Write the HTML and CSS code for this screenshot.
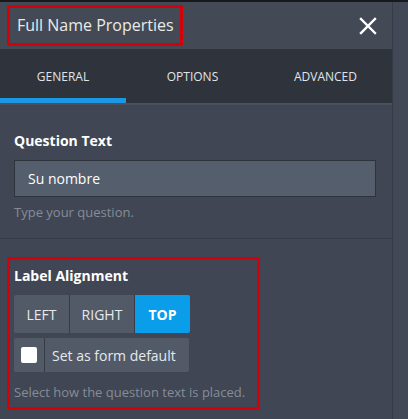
FILE: index.html
```html
<!DOCTYPE html>
<html>
<head>
    <meta charset="utf-8" />
    <title>Full Name Properties</title>
    <link rel="stylesheet" href="styles.css">
</head>
<body>
    <section class="panel">
        <header class="panel-header">
            <h1 class="panel-title">Full Name Properties</h1>
            <button class="close-btn" aria-label="Close">
                <svg width="18" height="18" viewBox="0 0 18 18">
                    <path d="M2 2 L16 16 M16 2 L2 16" stroke="#ffffff" stroke-width="2.4" stroke-linecap="square" />
                </svg>
            </button>
        </header>
        <nav class="tabs">
            <div class="tab active">GENERAL</div>
            <div class="tab">OPTIONS</div>
            <div class="tab">ADVANCED</div>
        </nav>
        <div class="field">
            <div class="field-label">Question Text</div>
            <input class="text-input" type="text" value="Su nombre" />
            <div class="field-help">Type your question.</div>
        </div>
        <div class="field field-marked">
            <div class="field-label">Label Alignment</div>
            <div class="btn-group">
                <button class="seg seg-left">LEFT</button>
                <button class="seg seg-right">RIGHT</button>
                <button class="seg selected">TOP</button>
            </div>
            <label class="check-row">
                <span class="check-cell"><span class="check-box"></span></span>
                <span class="check-text">Set as form default</span>
            </label>
            <div class="field-help">Select how the question text is placed.</div>
        </div>
    </section>
</body>
</html>
```
FILE: styles.css
```css
html, body {
    margin: 0;
    padding: 0;
}

body {
    background-color: #424855;
    border-top: 2px solid #17191d;
    font-family: "Open Sans", "Noto Sans", sans-serif;
    height: 417px;
    overflow: hidden;
}

.panel {
    width: 392px;
    height: 100%;
    background-color: #404653;
    border-right: 1px solid #363b46;
}

.panel-header {
    height: 47px;
    background-color: #434955;
    display: flex;
    align-items: center;
    justify-content: space-between;
}

.panel-title {
    margin: 0 0 0 7px;
    border: 3px solid #d4000a;
    border-radius: 2px;
    padding: 0 6px 0 7px;
    height: 35px;
    line-height: 34px;
    font-size: 16px;
    font-weight: normal;
    color: #e9ece8;
}

.close-btn {
    background: none;
    border: none;
    padding: 0;
    margin-right: 15px;
    width: 18px;
    height: 18px;
}

.tabs {
    display: flex;
    height: 54px;
    background-color: #2f333b;
    border-bottom: 2px solid #4a505c;
}

.tab {
    flex: 1;
    display: flex;
    align-items: center;
    justify-content: center;
    font-size: 12px;
    color: #e1e4e8;
    border-bottom: 5px solid transparent;
    box-sizing: border-box;
    padding-top: 5px;
}

    .tab.active {
        border-bottom-color: #1b97e3;
        flex: 0 0 126px;
    }

.field {
    padding: 26px 14px 17px 14px;
    border-bottom: 1px solid #373c47;
}

.field-label {
    font-size: 14px;
    line-height: 19px;
    font-weight: bold;
    color: #ffffff;
    margin-bottom: 10px;
}

.text-input {
    display: block;
    box-sizing: border-box;
    width: 362px;
    height: 37px;
    padding: 0 13px;
    background-color: #555e6d;
    border: 1px solid #2f343c;
    color: #ffffff;
    font-family: inherit;
    font-size: 14px;
}

.field-help {
    margin-top: 6px;
    font-size: 13px;
    line-height: 18px;
    color: #858d99;
}

.field-marked {
    border: 3px solid #d4000a;
    border-radius: 2px;
    margin: 18px 0 0 7px;
    width: 243px;
    padding: 6px 0 6px 4px;
}

    .field-marked .field-label {
        margin-bottom: 10px;
    }

.btn-group {
    display: flex;
}

.seg {
    height: 38px;
    background-color: #525a68;
    border: none;
    border-right: 1px solid #363b46;
    color: #e6e9ec;
    font-family: inherit;
    font-size: 14px;
    padding: 0;
    width: 55px;
}

    .seg.seg-left {
        border-radius: 2px 0 0 2px;
        width: 56px;
    }

    .seg.seg-right {
        width: 65px;
    }

    .seg.selected {
        background-color: #0a9de9;
        color: #ffffff;
        font-weight: bold;
        border-right: none;
        border-radius: 0 2px 2px 0;
    }

.check-row {
    display: flex;
    margin-top: 5px;
    height: 34px;
    width: 175px;
}

.check-cell {
    width: 30px;
    background-color: #525a68;
    border-right: 1px solid #363b46;
    display: flex;
    align-items: center;
    justify-content: center;
    border-radius: 2px 0 0 2px;
}

.check-box {
    width: 16px;
    height: 16px;
    background-color: #ffffff;
    border-radius: 2px;
}

.check-text {
    flex: 1;
    background-color: #525a68;
    color: #e6e9ec;
    font-size: 14px;
    display: flex;
    align-items: center;
    padding-left: 7px;
    border-radius: 0 2px 2px 0;
}

.field-marked .field-help {
    margin-top: 11px;
}
```
